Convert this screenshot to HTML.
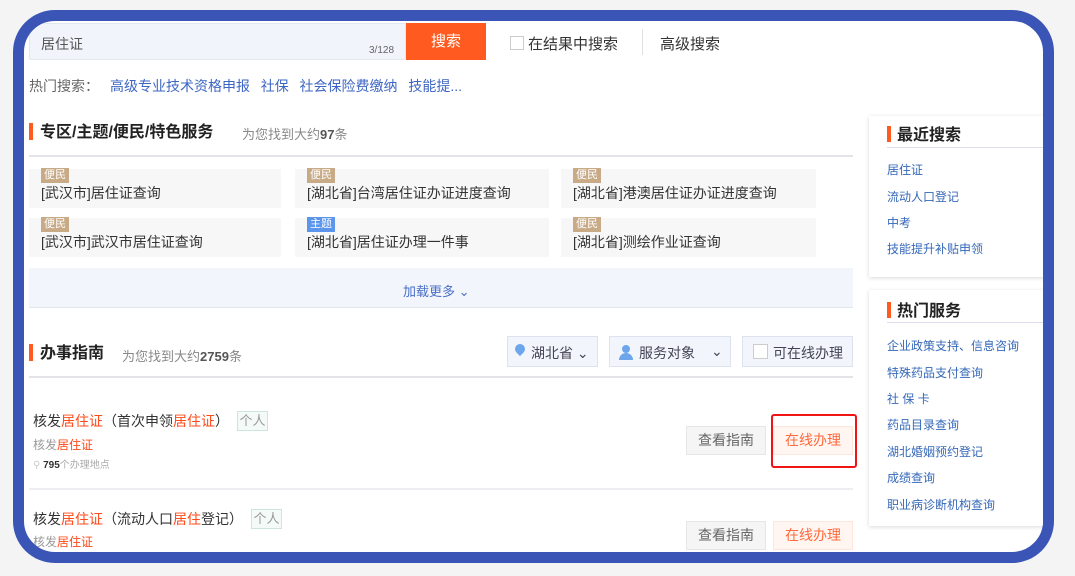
<!DOCTYPE html>
<html><head><meta charset="utf-8"><style>
*{margin:0;padding:0;box-sizing:border-box}
body{width:1075px;height:576px;background:#f4f4f4;font-family:"Liberation Sans","Noto Sans CJK SC",sans-serif;position:relative;overflow:hidden;color:#333}
.frame{position:absolute;left:13px;top:10px;width:1041px;height:553px;border:11px solid #3a55b5;border-radius:42px;background:#fff;overflow:hidden}
.a{position:absolute;white-space:nowrap}
.inner{position:absolute;left:-24px;top:-21px;width:1075px;height:576px}
.card{position:absolute;background:#f7f7f8;height:39px}
.tag{position:absolute;left:12px;top:-1px;background:#c8ab86;color:#fff;font-size:11px;line-height:15px;padding:0 3px}
.ct{position:absolute;left:12px;top:14px;font-size:14px;color:#333}
.btn{position:absolute;height:29px;font-size:14px;line-height:27px;text-align:center;border:1px solid #e4e6ea}
.lk{font-size:12px;color:#3568b8;position:absolute;left:887px}
.h{color:#ff4a1a}
.st{font-size:16px;line-height:18px;font-weight:bold;color:#222}
</style></head><body>
<div class="frame"><div class="inner">
<div class="a" style="left:29px;top:23px;width:377px;height:37px;background:#f1f4fb;border:1px solid #e2e7f0;border-radius:2px"></div>
<div class="a" style="left:41px;top:34px;font-size:14px;color:#555">居住证</div>
<div class="a" style="left:369px;top:45px;font-size:10px;color:#666">3/128</div>
<div class="a" style="left:406px;top:23px;width:80px;height:37px;background:#ff5a1f;color:#fff;font-size:15px;line-height:37px;text-align:center">搜索</div>
<div class="a" style="left:510px;top:36px;width:14px;height:14px;border:1px solid #ccc;background:#fff"></div>
<div class="a" style="left:528px;top:33px;font-size:15px;color:#333">在结果中搜索</div>
<div class="a" style="left:642px;top:29px;width:1px;height:26px;background:#e0e0e0"></div>
<div class="a" style="left:660px;top:33px;font-size:15px;color:#333">高级搜索</div>
<div class="a" style="left:29px;top:76px;font-size:14px;color:#666">热门搜索：</div>
<div class="a" style="left:110px;top:76px;font-size:14px;color:#3d66c4;word-spacing:1.5px">高级专业技术资格申报&nbsp;&nbsp;社保&nbsp;&nbsp;社会保险费缴纳&nbsp;&nbsp;技能提...</div>

<div class="a" style="left:29px;top:123px;width:4px;height:17px;background:#ff5a1f"></div>
<div class="a st" style="left:40px;top:124px">专区/主题/便民/特色服务</div>
<div class="a" style="left:242px;top:124px;font-size:13px;color:#888">为您找到大约<b style="color:#555">97</b>条</div>
<div class="a" style="left:29px;top:155px;width:824px;height:2px;background:#e2e4e8"></div>

<div class="card" style="left:29px;top:169px;width:252px"><span class="tag">便民</span><span class="ct">[武汉市]居住证查询</span></div>
<div class="card" style="left:295px;top:169px;width:254px"><span class="tag">便民</span><span class="ct">[湖北省]台湾居住证办证进度查询</span></div>
<div class="card" style="left:561px;top:169px;width:255px"><span class="tag">便民</span><span class="ct">[湖北省]港澳居住证办证进度查询</span></div>
<div class="card" style="left:29px;top:218px;width:252px"><span class="tag">便民</span><span class="ct">[武汉市]武汉市居住证查询</span></div>
<div class="card" style="left:295px;top:218px;width:254px"><span class="tag" style="background:#5c95ec">主题</span><span class="ct">[湖北省]居住证办理一件事</span></div>
<div class="card" style="left:561px;top:218px;width:255px"><span class="tag">便民</span><span class="ct">[湖北省]测绘作业证查询</span></div>

<div class="a" style="left:29px;top:268px;width:824px;height:40px;background:#f2f5fc;border-bottom:1px solid #e2e6ee"></div>
<div class="a" style="left:403px;top:281px;font-size:13px;color:#4a6fc7">加载更多 ⌄</div>

<div class="a" style="left:29px;top:344px;width:4px;height:17px;background:#ff5a1f"></div>
<div class="a st" style="left:40px;top:345px">办事指南</div>
<div class="a" style="left:122px;top:346px;font-size:13px;color:#888">为您找到大约<b style="color:#555">2759</b>条</div>
<div class="a" style="left:507px;top:336px;width:91px;height:31px;background:#f2f5fc;border:1px solid #dde3ee"></div>
<div class="a" style="left:515px;top:344px;width:10px;height:10px;border-radius:50% 50% 50% 0;transform:rotate(-45deg);background:#6ea6ec"></div>
<div class="a" style="left:531px;top:343px;font-size:14px;color:#445">湖北省 ⌄</div>
<div class="a" style="left:609px;top:336px;width:122px;height:31px;background:#f2f5fc;border:1px solid #dde3ee"></div>
<div class="a" style="left:622px;top:345px;width:8px;height:8px;border-radius:50%;background:#6ea6ec"></div>
<div class="a" style="left:619px;top:353px;width:14px;height:7px;border-radius:7px 7px 0 0;background:#6ea6ec"></div>
<div class="a" style="left:639px;top:343px;font-size:14px;color:#445">服务对象</div>
<div class="a" style="left:711px;top:343px;font-size:14px;color:#445">⌄</div>
<div class="a" style="left:742px;top:336px;width:111px;height:31px;background:#f2f5fc;border:1px solid #dde3ee"></div>
<div class="a" style="left:753px;top:344px;width:15px;height:15px;border:1px solid #ccc;background:#fff"></div>
<div class="a" style="left:773px;top:343px;font-size:14px;color:#445">可在线办理</div>
<div class="a" style="left:29px;top:376px;width:824px;height:2px;background:#e2e4e8"></div>

<div class="a" style="left:33px;top:411px;font-size:14px;color:#333">核发<span class="h">居住证</span>（首次申领<span class="h">居住证</span>）</div>
<div class="a" style="left:237px;top:411px;width:31px;height:20px;border:1px solid #cfe4dc;background:#f4faf7;color:#999;font-size:13px;line-height:18px;text-align:center">个人</div>
<div class="a" style="left:33px;top:436px;font-size:12px;color:#999">核发<span class="h">居住证</span></div>
<div class="a" style="left:33px;top:456px;font-size:10px;color:#aaa"><span style="color:#ccc">⚲</span> <b style="color:#333">795</b>个办理地点</div>
<div class="btn" style="left:686px;top:426px;width:80px;background:#f5f5f6;color:#666">查看指南</div>
<div class="btn" style="left:773px;top:426px;width:80px;background:#fff5f1;color:#ff6a3d;border-color:#fde6dc">在线办理</div>
<div class="a" style="left:771px;top:414px;width:86px;height:54px;border:2px solid #f01414;border-radius:3px"></div>
<div class="a" style="left:29px;top:488px;width:824px;height:2px;background:#eceef2"></div>

<div class="a" style="left:33px;top:509px;font-size:14px;color:#333">核发<span class="h">居住证</span>（流动人口<span class="h">居住</span>登记）</div>
<div class="a" style="left:251px;top:509px;width:31px;height:20px;border:1px solid #cfe4dc;background:#f4faf7;color:#999;font-size:13px;line-height:18px;text-align:center">个人</div>
<div class="a" style="left:33px;top:533px;font-size:12px;color:#999">核发<span class="h">居住证</span></div>
<div class="btn" style="left:686px;top:521px;width:80px;background:#f5f5f6;color:#666">查看指南</div>
<div class="btn" style="left:773px;top:521px;width:80px;background:#fff5f1;color:#ff6a3d;border-color:#fde6dc">在线办理</div>

<div class="a" style="left:869px;top:116px;width:200px;height:161px;background:#fff;box-shadow:0 1px 4px rgba(0,0,0,.15)"></div>
<div class="a" style="left:887px;top:126px;width:4px;height:16px;background:#ff5a1f"></div>
<div class="a st" style="left:897px;top:127px">最近搜索</div>
<div class="a" style="left:887px;top:147px;width:170px;height:1px;background:#dde"></div>
<div class="lk" style="top:161px">居住证</div>
<div class="lk" style="top:188px">流动人口登记</div>
<div class="lk" style="top:214px">中考</div>
<div class="lk" style="top:240px">技能提升补贴申领</div>

<div class="a" style="left:869px;top:290px;width:200px;height:236px;background:#fff;box-shadow:0 1px 4px rgba(0,0,0,.15)"></div>
<div class="a" style="left:887px;top:302px;width:4px;height:16px;background:#ff5a1f"></div>
<div class="a st" style="left:897px;top:303px">热门服务</div>
<div class="a" style="left:887px;top:322px;width:170px;height:1px;background:#dde"></div>
<div class="lk" style="top:337px">企业政策支持、信息咨询</div>
<div class="lk" style="top:364px">特殊药品支付查询</div>
<div class="lk" style="top:390px">社 保 卡</div>
<div class="lk" style="top:416px">药品目录查询</div>
<div class="lk" style="top:443px">湖北婚姻预约登记</div>
<div class="lk" style="top:469px">成绩查询</div>
<div class="lk" style="top:496px">职业病诊断机构查询</div>
</div></div>
</body></html>
